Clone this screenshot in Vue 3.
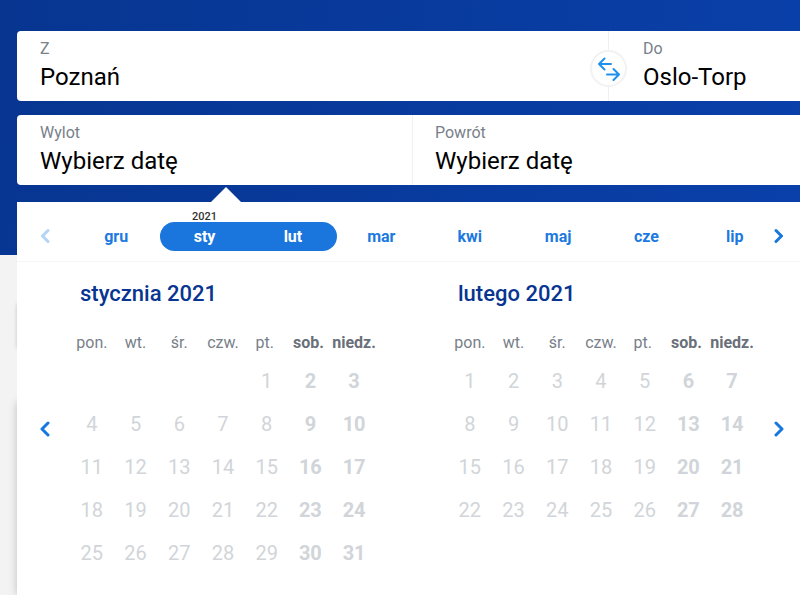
<template>
  <main class="page">
    <form class="search" @submit.prevent>
      <div class="row route">
        <div class="field">
          <label for="from">Z</label>
          <input id="from" v-model="from" type="text" autocomplete="off" />
        </div>
        <div class="field">
          <button class="swap" type="button" aria-label="Zamień" @click="swap">
            <svg width="24" height="24" viewBox="0 0 24 24">
              <path d="M14 7H2M7.500 1.500L2 7l5.500 5.500M10 17.500h12M16.500 12l5.500 5.500-5.500 5.500" />
            </svg>
          </button>
          <label for="to">Do</label>
          <input id="to" v-model="to" type="text" autocomplete="off" />
        </div>
      </div>
      <div class="row dates">
        <div class="field active">
          <label for="depart">Wylot</label>
          <input id="depart" type="text" placeholder="Wybierz datę" readonly />
        </div>
        <div class="field">
          <label for="return">Powrót</label>
          <input id="return" type="text" placeholder="Wybierz datę" readonly />
        </div>
      </div>
    </form>

    <section class="picker">
      <nav class="months">
        <button class="arrow" type="button" aria-label="Wcześniejsze miesiące" disabled>
          <svg width="10" height="16" viewBox="0 0 10 16"><path d="M8 2.500L2.500 8 8 13.500" /></svg>
        </button>
        <ul>
          <li v-for="m in months" :key="m.name">
            <span v-if="m.year" class="year">{{ m.year }}</span>
            <button type="button" class="month" :class="{ selected: m.selected }">{{ m.name }}</button>
          </li>
        </ul>
        <button class="arrow next" type="button" aria-label="Późniejsze miesiące">
          <svg width="10" height="16" viewBox="0 0 10 16"><path d="M2 2.500L7.500 8 2 13.500" /></svg>
        </button>
      </nav>

      <div class="calendars">
        <button class="arrow" type="button" aria-label="Poprzedni miesiąc">
          <svg width="10" height="16" viewBox="0 0 10 16"><path d="M8 2L2 8l6 6" /></svg>
        </button>
        <table v-for="c in calendars" :key="c.title">
          <caption>{{ c.title }}</caption>
          <thead>
            <tr><th v-for="d in weekdays" :key="d" scope="col">{{ d }}</th></tr>
          </thead>
          <tbody>
            <tr v-for="(week, i) in weeks(c)" :key="i">
              <td v-for="(day, j) in week" :key="j">
                <button v-if="day" type="button" disabled>{{ day }}</button>
              </td>
            </tr>
          </tbody>
        </table>
        <button class="arrow next" type="button" aria-label="Następny miesiąc">
          <svg width="10" height="16" viewBox="0 0 10 16"><path d="M2 2l6 6-6 6" /></svg>
        </button>
      </div>
    </section>
  </main>
</template>

<script setup>
import { ref } from 'vue'

const from = ref('Poznań')
const to = ref('Oslo-Torp')

const months = [
  { name: 'gru' },
  { name: 'sty', year: 2021, selected: true },
  { name: 'lut', selected: true },
  { name: 'mar' },
  { name: 'kwi' },
  { name: 'maj' },
  { name: 'cze' },
  { name: 'lip' }
]

const weekdays = ['pon.', 'wt.', 'śr.', 'czw.', 'pt.', 'sob.', 'niedz.']

// offset = empty cells before the 1st
const calendars = [
  { title: 'stycznia 2021', offset: 4, days: 31 },
  { title: 'lutego 2021', offset: 0, days: 28 }
]

function weeks({ offset, days }) {
  const cells = [...Array(offset).fill(null), ...Array.from({ length: days }, (_, i) => i + 1)]
  const rows = []
  for (let i = 0; i < cells.length; i += 7) rows.push(cells.slice(i, i + 7))
  return rows
}

function swap() {
  [from.value, to.value] = [to.value, from.value]
}
</script>

<style>
body { background: #f3f3f3; }
</style>

<style scoped>
.page {
  box-sizing: border-box; min-height: 100vh; padding: 31px 0 0 17px;
  display: flex; flex-direction: column; gap: 17px; overflow: hidden;
  font-family: Roboto, "Liberation Sans", sans-serif;
  background: linear-gradient(100deg, #073590, #0a40aa) top / 100% 255px no-repeat;
}
button, input { font: inherit; border: 0; padding: 0; background: none; }
button:not(:disabled) { cursor: pointer; }
svg { display: block; fill: none; stroke: currentColor; stroke-linecap: round; stroke-linejoin: round; }

.search { display: flex; flex-direction: column; gap: 14px; }
.row { display: grid; background: #fff; border-radius: 4px 0 0 4px; }
.route { grid-template-columns: 591fr 192fr; }
.dates { grid-template-columns: 395fr 388fr; }
.field { position: relative; min-width: 0; padding: 8px 0 6px 23px; display: flex; flex-direction: column; }
.field + .field { border-left: 1px solid #f0f0f0; padding-left: 22px; }
.route .field + .field { padding-left: 34px; }
.field label { font-size: 16px; line-height: 20px; color: #78808a; }
.field input { width: 100%; height: 36px; font-size: 24px; color: #000; outline: none; }
.field input::placeholder { color: #000; opacity: 1; }
.swap {
  position: absolute; left: -19px; top: 19px; width: 37px; height: 37px; box-sizing: border-box;
  display: flex; align-items: center; justify-content: center;
  border: 2px solid #f2f2f2; border-radius: 50%; background: #fff; color: #2091eb;
}
.swap svg { stroke-width: 2; }
.active::after {
  content: ''; position: absolute; left: 194px; top: 100%; margin-top: 2px;
  border: 15px solid transparent; border-top: 0; border-bottom-color: #fff;
}

.picker { position: relative; z-index: 0; flex: 1; background: #fff; }
/* cards of the page below, their shadows show beside the picker */
.picker::before, .picker::after { content: ''; position: absolute; z-index: -1; left: 0; right: 0; }
.picker::before { top: 102px; height: 44px; box-shadow: 0 0 4px rgba(0, 0, 0, .2); }
.picker::after { top: 200px; bottom: 0; box-shadow: 0 0 8px rgba(0, 0, 0, .22); }

.months { display: flex; align-items: stretch; border-bottom: 1px solid #f6f6f6; background: #fff; }
.months ul { flex: 1; display: flex; margin: 0; padding: 0; list-style: none; }
.months li { position: relative; flex: 1; padding: 20px 0 10px; }
.month { width: 100%; height: 29px; font-size: 16px; font-weight: 700; color: #1b79e0; }
.month.selected { background: #1a76dc; color: #fff; }
li:nth-child(2) .selected { border-radius: 15px 0 0 15px; }
li:nth-child(3) .selected { border-radius: 0 15px 15px 0; }
.year { position: absolute; top: 8px; width: 100%; text-align: center; font-size: 11px; line-height: 14px; font-weight: 500; color: #333; }

.arrow { width: 55px; display: flex; align-items: center; justify-content: center; color: #1677e0; }
.arrow svg { stroke-width: 3; }
.months .arrow { padding-top: 8px; }
.months .arrow:disabled { color: #b3d4f7; }
.arrow.next { width: 42px; }
.months .next { margin-left: -21px; }

.calendars { display: grid; grid-template-columns: 53px 1fr 1fr 46px; align-items: start; background: #fff; }
.calendars .arrow { height: 48px; margin-top: 143px; }
.calendars .next { justify-self: end; }
table { width: calc(100% - 36px); table-layout: fixed; border-collapse: collapse; }
table + table { margin-left: 36px; }
caption { padding: 17px 0 16px 10px; text-align: left; font-size: 22px; line-height: 30px; font-weight: 500; color: #073590; }
th { height: 34px; padding: 0; font-size: 16px; font-weight: 400; color: #78808a; white-space: nowrap; }
th:nth-child(n + 5) { padding-right: 4px; }
th:nth-child(n + 6) { font-weight: 700; color: #697079; }
td { height: 43px; padding: 0; }
td button { width: 100%; height: 43px; display: block; font-size: 20px; color: #d1d5d9; }
td:nth-child(n + 6) button { font-weight: 700; }
</style>
